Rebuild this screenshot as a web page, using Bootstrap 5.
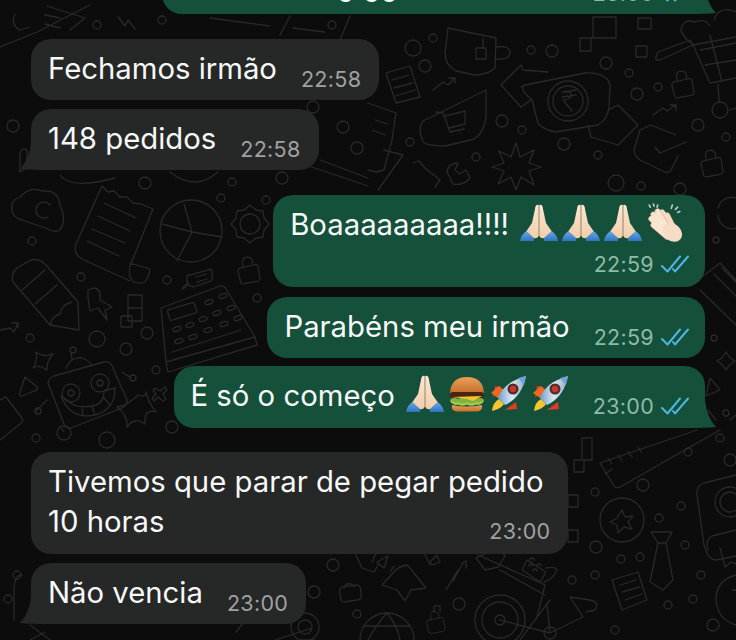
<!DOCTYPE html>
<html lang="pt-BR">
<head>
  <meta charset="UTF-8">
  <title>Conversa</title>
  <meta name="viewport" content="width=device-width, initial-scale=1">
  <link href="https://cdn.jsdelivr.net/npm/bootstrap@5.3.3/dist/css/bootstrap.min.css" rel="stylesheet">
  <style>
    html, body { height: 100%; }
    body { background: #0c0c0c; overflow: hidden; }
    .wa-chat { position: relative; height: 640px; overflow: hidden; padding: 0 31px; font-family: Inter, "Liberation Sans", sans-serif; }
    .wa-doodles { position: absolute; left: 0; top: 0; fill: none; stroke: #292929; stroke-width: 1.3; stroke-linecap: round; stroke-linejoin: round; }
    .wa-list { position: relative; z-index: 1; }
    .wa-bubble { position: relative; border-radius: 20px; color: #f7f8f8; padding: 10px 18px 11px 17px; font-size: 29.3px; line-height: 40px; }
    .wa-in { background: #262727; }
    .wa-out { background: #14503a; padding-right: 16px; }
    .wa-first { height: 62px; margin-top: -48px; width: 543px; }
    .wa-peek { margin-bottom: -9px; margin-right: 195px; }
    .wa-time { font-size: 21.5px; line-height: 24px; color: #a0a1a1; letter-spacing: .3px; white-space: nowrap; }
    .wa-out .wa-time { color: #8fbaa8; }
    .wa-meta { margin-bottom: -2px; }
    .wa-meta-row { margin-top: 7px; }
    .wa-text-pad { padding-right: 7px; }
    .wa-gap-lg { margin-top: 25px; }
    .wa-gap-md { margin-top: 10px; }
    .wa-gap-sm { margin-top: 9px; }
    .wa-tall { padding-bottom: 12px; }
    .wa-tick { width: 28px; height: 18px; margin-left: 7px; fill: none; stroke: #4fb6e3; stroke-width: 2; stroke-linecap: round; stroke-linejoin: round; }
    .wa-emoji { width: 40px; height: 40px; flex: none; transform: translateY(-2px); }
    .wa-emoji-sm { width: 36px; height: 36px; flex: none; transform: translateY(-2px); }
    .wa-pitch { margin-right: 2px; }
    .wa-e-first { margin-left: 10px; }
    .wa-e-next { margin-left: 6px; }
    .wa-tail-out::after, .wa-tail-in::after { content: ""; position: absolute; z-index: -1; bottom: 0; width: 31px; height: 28px; background: inherit; }
    .wa-tail-out::after { right: -11px; clip-path: path('M20 0 Q22 18 31 27 Q22 28 0 28 L0 0 Z'); }
    .wa-tail-in::after { left: -11px; clip-path: path('M11 0 Q10 16 0 27 Q12 28 31 28 L31 0 Z'); }
  </style>
</head>
<body>

<svg width="0" height="0" class="position-absolute">
  <defs>
    <linearGradient id="skin" x1="0" y1="0" x2="0" y2="1"><stop offset="0" stop-color="#fce7d3"/><stop offset="1" stop-color="#f2cdab"/></linearGradient>
    <linearGradient id="sleeve" x1="0" y1="0" x2="0" y2="1"><stop offset="0" stop-color="#6fb0e6"/><stop offset="1" stop-color="#2f74c0"/></linearGradient>
    <linearGradient id="bun" x1="0" y1="0" x2="0" y2="1"><stop offset="0" stop-color="#eb9f58"/><stop offset="1" stop-color="#c4702c"/></linearGradient>
    <linearGradient id="hull" x1="0" y1="0" x2="1" y2="0"><stop offset="0" stop-color="#6f9fd0"/><stop offset=".5" stop-color="#dfe8f0"/><stop offset="1" stop-color="#8fa8c4"/></linearGradient>

    <symbol id="e-pray" viewBox="0 0 40 40">
      <path d="M1 38 Q2 31 9 27 L15 33 L15 38 Z M39 38 Q38 31 31 27 L25 33 L25 38 Z" fill="url(#sleeve)"/>
      <path d="M19.7 2 Q16.5 1 16 6 L13 20 L7.5 28 L15 35 Q18 36 19.7 33 Z" fill="url(#skin)"/>
      <path d="M20.3 2 Q23.5 1 24 6 L27 20 L32.5 28 L25 35 Q22 36 20.3 33 Z" fill="url(#skin)"/>
      <path d="M20 3 L20 33" stroke="#d9ae8c" stroke-width=".8"/>
    </symbol>

    <symbol id="e-clap" viewBox="0 0 36 38">
      <g stroke="#b9cbbd" stroke-width="1.6" stroke-linecap="round">
        <path d="M3 2 L4 4 M7 1 L7.5 3 M11 2 L10.5 4 M25 2 L24 5 M30 4 L28 6 M32 8 L30 9"/>
      </g>
      <g fill="none" stroke-linecap="round">
        <g stroke="#d9ae8c" stroke-width="6"><path d="M27 24 L15 9 M27 26 L20 12"/></g>
        <g stroke="#f6dcc4" stroke-width="5"><path d="M27 24 L15 9 M27 26 L20 12"/></g>
        <g stroke="#d9ae8c" stroke-width="5.6"><path d="M23 27 L11 8 M21 28 L7 11 M20 30 L5 15 M20 32 L7 21"/></g>
        <g stroke="#fae5d2" stroke-width="4.6"><path d="M23 27 L11 8 M21 28 L7 11 M20 30 L5 15 M20 32 L7 21"/></g>
      </g>
      <ellipse cx="25" cy="28" rx="10" ry="8" transform="rotate(40 25 28)" fill="#f6dcc4"/>
    </symbol>

    <symbol id="e-burger" viewBox="0 0 36 36">
      <path d="M1 17 Q2 1 18 1 Q34 1 35 17 Z" fill="url(#bun)"/>
      <path d="M1 24 Q4 20 9 23 Q14 20 18 23 Q23 20 27 23 Q32 20 35 24 L34 27 Q18 30 2 27 Z" fill="#7fb33c"/>
      <rect x="1" y="16" width="34" height="6" rx="3" fill="#4b2415"/>
      <path d="M3 21 L33 20 L24 25 L18 23 Z" fill="#f7c531"/>
      <path d="M2 24 Q6 28 9 26 Q14 29 18 26 Q23 29 27 26 Q31 28 34 24 L34 26 Q31 30 27 28.5 Q22 31 18 28.5 Q13 31 9 28.5 Q5 30 2 26 Z" fill="#a8cc52"/>
      <path d="M3 29 Q18 32 33 29 Q34 35 28 35.5 L8 35.5 Q2 35 3 29 Z" fill="url(#bun)"/>
    </symbol>

    <symbol id="e-rocket" viewBox="0 0 36 36">
      <path d="M2 22 L10 11 L4 10 Z M14 34 L25 26 L26 33 Z" fill="#e23a24"/>
      <path d="M0 17 L8 10 L14 15 L7 22 Z" fill="#ee6a22"/>
      <path d="M1 35 Q2 26 8 23 L13 28 Q10 33 1 35 Z" fill="#f7c531"/>
      <path d="M7 22 Q13 6 35 0 Q31 21 14 29 Z" fill="url(#hull)"/>
      <circle cx="22" cy="13" r="5.5" fill="#4b2d2d"/>
      <circle cx="22" cy="13" r="3.2" fill="#c8392a"/>
      <path d="M27 2 L35 0 L33 9 Z" fill="#6da3d8"/>
    </symbol>

    <symbol id="e-tick" viewBox="0 0 28 18">
      <path d="M1 11 L6.5 16.5 L19 1.5 M12 14 L14 16.5 L27 1.5"/>
    </symbol>

    <symbol id="d-lock" viewBox="0 0 26 30" overflow="visible">
      <path d="M4 13 L21 9 Q24 9 24 12 L26 24 Q26 26 24 27 L8 30 Q5 30 5 28 L2 16 Q2 14 4 13 Z"/>
      <path d="M8 12 L7 7 Q7 1 12 1 Q17 1 18 6 L18 10"/>
    </symbol>
  </defs>
</svg>

<div class="wa-chat">
  <!-- fundo -->
  <svg class="wa-doodles" width="736" height="640" viewBox="0 0 736 640">
    <g id="dots">
      <circle cx="97" cy="25" r="4"/><circle cx="162" cy="20" r="4"/><circle cx="332" cy="25" r="4"/><circle cx="13" cy="126" r="6"/><circle cx="343" cy="127" r="6"/><circle cx="357" cy="148" r="6"/><circle cx="145" cy="183" r="6"/><circle cx="232" cy="182" r="4"/><circle cx="282" cy="178" r="6"/><circle cx="313" cy="107" r="6"/>
      <circle cx="413" cy="48" r="8"/><circle cx="433" cy="38" r="4"/><circle cx="425" cy="66" r="6"/><circle cx="531" cy="50" r="4"/><circle cx="552" cy="51" r="6"/><circle cx="606" cy="63" r="6"/><circle cx="629" cy="73" r="4"/><circle cx="637" cy="94" r="6"/><circle cx="658" cy="87" r="4"/><circle cx="502" cy="121" r="6"/><circle cx="522" cy="130" r="4"/><circle cx="410" cy="142" r="4"/><circle cx="476" cy="157" r="4"/><circle cx="564" cy="144" r="6"/><circle cx="598" cy="155" r="4"/><circle cx="616" cy="183" r="8"/><circle cx="641" cy="186" r="4"/><circle cx="680" cy="189" r="6"/><circle cx="698" cy="125" r="6"/><circle cx="726" cy="137" r="4"/><circle cx="720" cy="110" r="8"/>
      <circle cx="221" cy="198" r="4"/><circle cx="266" cy="200" r="4"/><circle cx="32" cy="241" r="4"/><circle cx="81" cy="277" r="4"/><circle cx="167" cy="280" r="4"/><circle cx="257" cy="298" r="4"/><circle cx="30" cy="338" r="4"/><circle cx="97" cy="339" r="8"/><circle cx="147" cy="333" r="6"/><circle cx="126" cy="349" r="6"/>
      <circle cx="156" cy="370" r="4"/><circle cx="172" cy="427" r="6"/><circle cx="36" cy="438" r="4"/><circle cx="107" cy="440" r="8"/>
      <circle cx="595" cy="492" r="4"/><circle cx="643" cy="485" r="6"/><circle cx="688" cy="452" r="4"/><circle cx="720" cy="438" r="4"/><circle cx="730" cy="460" r="6"/><circle cx="681" cy="506" r="4"/><circle cx="659" cy="518" r="4"/><circle cx="685" cy="545" r="4"/><circle cx="596" cy="547" r="6"/><circle cx="621" cy="559" r="4"/><circle cx="640" cy="557" r="4"/><circle cx="595" cy="575" r="4"/><circle cx="572" cy="580" r="4"/><circle cx="701" cy="575" r="4"/><circle cx="693" cy="599" r="4"/><circle cx="668" cy="605" r="4"/><circle cx="713" cy="625" r="6"/><circle cx="615" cy="630" r="4"/>
      <circle cx="333" cy="565" r="6"/><circle cx="314" cy="592" r="6"/><circle cx="357" cy="614" r="4"/><circle cx="459" cy="604" r="6"/><circle cx="17" cy="575" r="4"/><circle cx="8" cy="599" r="4"/>
      <circle cx="716" cy="240" r="3"/><circle cx="714" cy="338" r="3"/><circle cx="726" cy="413" r="3"/>
    </g>

    <!-- nota, nuvem, pizza, engrenagem -->
    <path d="M102 186 L108 192 L114 191 L120 197 L127 197 L133 203 L141 204 L153 209 L130 266 Q127 283 140 283 Q148 284 150 269 L130 263 M130 281 L82 259 Q73 254 76 244 L102 186 M104 203 L136 218 M98 216 L130 231 M92 229 L125 243 M87 241 L119 256"/>
    <path d="M12 210 Q10 200 20 197 Q30 186 42 191 Q58 189 60 205 Q67 220 60 230 Q55 233 48 229 L22 220 Q13 218 12 210 Z M50 205 A8 8 0 1 0 48 217"/>
    <circle cx="191" cy="231" r="31"/><path d="M184 204 L192 232 L222 237 M192 232 L177 261 M192 232 L162 224"/>
    <circle cx="250" cy="224" r="10"/><polygon points="269,224 264,230 263,237 256,238 250,243 244,238 237,237 236,230 231,224 236,218 237,211 244,210 250,205 256,210 263,211 264,218"/>
    <use href="#d-lock" x="236" y="256" width="24" height="28"/>
    <use href="#d-lock" x="670" y="70" width="24" height="28"/>
    <use href="#d-lock" x="699" y="149" width="24" height="28"/>
    <use href="#d-lock" x="425" y="610" width="20" height="24"/>

    <!-- lápis -->
    <path d="M13 282 Q10 274 17 268 L31 260 Q39 258 45 264 L78 302 L79 330 L50 325 Z M22 290 L45 270 M35 304 L57 285 M50 325 Q52 316 60 314 Q62 304 72 302"/>

    <!-- caixa registradora -->
    <path d="M161 308 L220 286 Q224 285 226 289 L255 337 L257 345 L168 372 L166 362 Z M166 362 L255 337 M172 352 L241 330 M187 280 L187 284 Q187 287 182 289 Q187 281 190 286 M190 275 L211 269 Q214 276 211 281 L193 287 Q186 285 187 277 Q187 275 190 275 Z M196 277 L206 274 M197 282 L207 279"/>
    <rect x="168" y="306" width="28" height="11" rx="2" transform="rotate(-17 182 311)"/>
    <g id="keys"><rect x="205" y="300" width="8" height="4" rx="2" transform="rotate(-18 209 302)"/><rect x="219" y="294" width="8" height="4" rx="2" transform="rotate(-18 223 296)"/><rect x="173" y="327" width="8" height="4" rx="2" transform="rotate(-18 177 329)"/><rect x="186" y="323" width="8" height="4" rx="2" transform="rotate(-18 190 325)"/><rect x="199" y="317" width="8" height="4" rx="2" transform="rotate(-18 203 319)"/><rect x="213" y="311" width="8" height="4" rx="2" transform="rotate(-18 217 313)"/><rect x="227" y="306" width="8" height="4" rx="2" transform="rotate(-18 231 308)"/><rect x="175" y="339" width="8" height="4" rx="2" transform="rotate(-18 179 341)"/><rect x="189" y="335" width="8" height="4" rx="2" transform="rotate(-18 193 337)"/><rect x="204" y="328" width="8" height="4" rx="2" transform="rotate(-18 208 330)"/><rect x="220" y="322" width="8" height="4" rx="2" transform="rotate(-18 224 324)"/><rect x="234" y="316" width="8" height="4" rx="2" transform="rotate(-18 238 318)"/></g>

    <!-- peças pequenas -->
    <path d="M88 298 L88 290 Q97 285 100 293 L100 300 L112 307 L105 310 L107 320 L98 308 L90 311 Z M128 295 L142 295 L142 308 L128 308 Z M128 308 L142 308 L142 321 L128 321 Z M121 316 L132 316 L132 327 L121 327 Z"/>
    <path d="M0 330 L10 328 L14 332 L18 323 M12 323 L18 323 L18 328"/>

    <!-- robô, estrelas -->
    <path d="M48 383 Q49 378 54 376 L104 362 Q110 361 112 366 L127 400 Q128 405 122 408 L71 428 Q66 429 64 424 Z M66 368 Q72 356 82 358 Q90 361 92 366 M71 352 L72 360 M122 372 L131 378 M47 400 L36 411 M60 426 L64 432"/>
    <circle cx="71" cy="393" r="9"/><circle cx="71" cy="393" r="3"/><circle cx="100" cy="383" r="9"/><circle cx="100" cy="383" r="3"/><circle cx="73" cy="350" r="3"/><circle cx="133" cy="378" r="3"/><circle cx="38" cy="411" r="3"/><circle cx="64" cy="433" r="7"/>
    <path d="M61 396 Q70 420 95 415 Q115 410 115 388 L104 391 Q104 404 92 406 Q78 408 72 404 Z M82 407 L83 416 M92 406 L95 415 M104 398 L110 405"/>
    <path d="M36 352 Q44 358 51 354 L53 354 Q46 362 47 370 Q38 364 33 368 Q38 360 36 352 Z"/>
    <path d="M25 377 L37 387 Q39 390 34 391 L22 396 Q19 397 20 392 Z"/>
    <path d="M138 395 Q146 398 146 392 Q148 402 156 412 Q144 408 145 424 Q135 416 127 427 Q128 415 117 407 Q127 406 138 395 Z"/>
    <path d="M155 388 L160 391 L165 387 L167 390 L163 394 L166 399 L163 401 L158 397 L154 401 L152 398 L156 394 L153 390 Z"/>
    <path d="M0 400 L6 397 L22 418 Q24 422 20 424 L0 440"/>

    <!-- canto superior -->
    <path d="M0 47 L37 32 L90 5 M15 14 Q10 25 20 30 L30 27 M45 15 L60 18 M45 24 L60 28 M47 6 L85 18 L70 30 M118 17 L125 26 L128 20 L135 29 M210 18 L270 26 M290 16 L280 35 M293 28 L325 32 M350 16 L340 40 M300 163 L368 186 M320 160 L368 178"/>
    <path d="M20 172 L27 168 L27 150 Q22 147 20 153 Z M60 175 Q70 190 115 178 M170 172 Q195 192 218 172"/>

    <!-- direita de cima -->
    <path d="M448 28 L496 38 L495 68 Q490 74 475 75 L456 71 Q445 65 445 53 Z M496 47 Q510 45 510 53 Q510 60 495 59 M483 38 L483 48"/>
    <rect x="476" y="48" width="10" height="11"/>
    <path d="M580 38 L591 38 L591 51 L580 51 Z M593 17 L616 17 L616 38 L593 38 Z M580 38 L593 38 M636 46 L647 46 L647 57 L636 57 Z M638 18 L651 18 L651 29 L638 29 Z"/>
    <path d="M433 90 L443 82 L448 85 L455 78 M449 78 L455 78 L455 83 M653 115 L663 108 L667 111 L676 105 M670 105 L676 105 L676 111"/>
    <path d="M423 123 L486 92 L486 120 Q482 140 470 142 L445 148 Q425 148 423 143 Q417 132 423 123 Z" transform="translate(0 -2)"/>
    <path d="M436 112 L443 113 L450 132 L464 129 M445 116 L465 111 L465 124 L449 128 M452 135 L452 135 M461 133 L461 133"/>
    <path d="M525 85 L585 73 Q607 72 610 85 L609 108 Q607 120 598 125 L555 132 Q540 128 538 123 L532 100 Q518 88 525 85 Z"/>
    <circle cx="568" cy="101" r="20"/><circle cx="568" cy="101" r="15"/>
    <path d="M562 92 L576 90 M562 97 L576 95 M565 92 Q572 91 571 96 Q569 100 563 100 L572 111"/>
    <path d="M525 85 L521 87 M548 72 L523 70 L521 65 L501 85 L521 107 L531 100 M608 110 L618 105 L638 125 L618 145 L591 137 L588 125"/>
    <polygon points="516,143 520,157 534,150 529,163 541,167 529,171 534,185 521,177 516,190 511,177 498,184 504,171 492,167 504,163 499,151 511,157"/>
    <path d="M413 163 L419 161 L425 168 L440 180 L435 187 M458 163 Q448 163 447 172 L453 184 Q464 186 470 178 L466 170 L460 174 L455 170 Z"/>
    <path d="M386 73 L410 66 L420 97 L396 103 Z M392 80 L409 75 M394 88 L412 83 M396 96 L415 90"/>
    <path d="M368 103 L396 113 L392 140 L384 170 L376 172 L368 170 M384 150 L403 155 L378 190 M375 120 L388 124 M372 130 L385 135"/>
    <path d="M651 125 L676 135 M686 142 L660 153 L655 147 M651 125 L640 130 L634 150 Q634 155 640 160 L665 172 Q670 174 672 168 L678 156"/>
    <path d="M656 57 Q655 61 660 60 L693 45 L690 40 L658 52 Z M693 45 L736 37 M693 45 L710 83 L736 78 M700 50 L736 43 M705 65 L736 60 M710 35 L722 82 M718 84 L719 102 M730 110 L736 108"/>
    <path d="M681 30 Q683 18 695 22 Q705 18 710 26 M681 30 Q684 40 695 45 M714 20 Q718 8 730 10 L736 12"/>

    <!-- direita do meio -->
    <path d="M718 208 A14 14 0 0 1 736 198 M718 215 A14 14 0 0 0 736 228 M698 280 L720 263 L736 280 M700 290 L736 325 M714 274 L736 296 M722 268 L736 282"/>
    <path d="M726 352 Q729 358 735 361 Q729 364 726 370 Q723 364 717 361 Q723 358 726 352 Z M710 378 L720 390 L706 396 Z M708 410 L716 420 M736 415 L730 420"/>

    <!-- embaixo, direita -->
    <path d="M600 463 L697 430 M605 474 L612 469 M600 463 L614 486 Q616 489 620 487 L720 430 M608 458 L612 464 M618 455 L622 461 M628 451 L632 457 M638 447 L642 453"/>
    <path d="M582 438 L592 438 L592 460 L582 460 Z M574 460 L584 460 L584 472 L574 472 Z M584 460 L592 460 M568 495 L578 495 L578 507 L568 507 Z M568 530 L578 530 L578 542 L568 542 Z"/>
    <circle cx="622" cy="520" r="22"/>
    <path d="M622 510 L625 517 L633 516 L628 522 L632 529 L624 527 L618 533 L617 525 L610 522 L617 518 Z"/>
    <path d="M651 532 L672 532 L666 543 L673 580 L663 590 L650 582 L658 543 Z M658 543 L666 543"/>
    <path d="M612 580 L638 572 L647 600 L622 610 Z M620 585 L636 580 M622 592 L640 587 M625 600 L642 594"/>
    <path d="M736 475 L704 483 Q696 486 697 495 L704 545 Q708 560 716 560 L736 556 M736 530 L712 536 Q705 540 708 550 M720 548 L725 567 L731 562 L736 564"/>
    <circle cx="730" cy="502" r="15"/><circle cx="730" cy="502" r="10"/>
    <path d="M736 575 Q716 580 716 600 Q718 620 736 625 M732 590 L736 590"/>
    <!-- bicicleta -->
    <circle cx="500" cy="620" r="25"/><circle cx="500" cy="620" r="18"/><circle cx="500" cy="620" r="5"/><circle cx="550" cy="633" r="6"/>
    <path d="M478 555 L545 585 M500 570 L545 595 M545 585 L537 617 M547 603 L550 633 M550 633 L583 617 L570 597 M570 597 L590 600 Q600 602 595 610 L586 612 M500 620 L550 633 M520 640 L550 600"/>
    <path d="M527 560 L546 572 L540 582 L522 570 Z M546 568 Q555 566 557 570 Q552 580 544 582"/>
    <path d="M530 560 A2 2 0 0 1 534 560 M537 566 A2 2 0 0 1 541 566 M533 571 A2 2 0 0 1 537 571 M529 566 A2 2 0 0 1 533 566"/>
    <path d="M476 558 L498 548 L505 556 L498 567 L485 570 Z M446 590 L458 570 L453 581 L463 563 M462 563 L466 561 L466 568"/>

    <!-- embaixo, meio -->
    <rect x="340" y="586" width="21" height="15" rx="4" transform="rotate(-8 350 593)"/>
    <path d="M344 588 L346 584 L352 584 L354 587"/>
    <path d="M407 565 Q412 570 414 573 L426 588 L411 590 L405 601 L397 590 L382 585 L392 574 Q398 566 407 565 Z M394 566 L390 572 M356 555 L362 568 L374 572 L378 565 M376 553 L372 562 M424 553 L430 565"/>
    <path d="M377 562 L388 556 L384 568 Z M430 562 L437 555 L440 562 L432 565 Z"/>
    <path d="M360 640 A27 27 0 0 1 414 640 M387 613 Q376 625 368 640 M387 613 Q397 625 400 640 M364 626 Q385 626 410 626"/>
    <path d="M434 612 L434 606 L440 606 L440 612"/>
    <circle cx="305" cy="627" r="14"/><circle cx="305" cy="627" r="7"/>
    <path d="M275 640 L312 628 M250 575 L250 600 M280 600 Q260 590 252 612 L236 632"/>
    <path d="M14 620 L14 590 Q14 575 22 575 M30 625 L50 640 M30 640 L45 632 M300 640 L315 640"/>
  </svg>

  <div class="wa-list d-flex flex-column">
    <div class="d-flex justify-content-end">
      <div class="wa-bubble wa-out wa-first wa-tail-out d-flex justify-content-end align-items-end">
        <span class="wa-peek">o oo</span>
        <span class="wa-meta d-flex align-items-center"><span class="wa-time">23:00</span><svg class="wa-tick"><use href="#e-tick"/></svg></span>
      </div>
    </div>

    <div class="d-flex justify-content-start wa-gap-lg">
      <div class="wa-bubble wa-in d-flex align-items-end">
        <span>Fechamos irmão</span>
        <span class="wa-time wa-meta ms-4">22:58</span>
      </div>
    </div>
    <div class="d-flex justify-content-start wa-gap-sm">
      <div class="wa-bubble wa-in wa-tail-in d-flex align-items-end">
        <span>148 pedidos</span>
        <span class="wa-time wa-meta ms-4">22:58</span>
      </div>
    </div>

    <div class="d-flex justify-content-end wa-gap-lg">
      <div class="wa-bubble wa-out d-flex flex-column">
        <span class="d-flex align-items-center">Boaaaaaaaaa!!!!
          <svg class="wa-emoji wa-e-first wa-pitch"><use href="#e-pray"/></svg>
          <svg class="wa-emoji wa-pitch"><use href="#e-pray"/></svg>
          <svg class="wa-emoji wa-pitch"><use href="#e-pray"/></svg>
          <svg class="wa-emoji me-1"><use href="#e-clap"/></svg>
        </span>
        <span class="wa-meta-row d-flex align-items-center justify-content-end"><span class="wa-time">22:59</span><svg class="wa-tick"><use href="#e-tick"/></svg></span>
      </div>
    </div>
    <div class="d-flex justify-content-end wa-gap-md">
      <div class="wa-bubble wa-out d-flex align-items-end">
        <span>Parabéns meu irmão</span>
        <span class="wa-meta d-flex align-items-center ms-4"><span class="wa-time">22:59</span><svg class="wa-tick"><use href="#e-tick"/></svg></span>
      </div>
    </div>
    <div class="d-flex justify-content-end mt-2">
      <div class="wa-bubble wa-out wa-tall wa-tail-out d-flex align-items-end">
        <span class="d-flex align-items-center">É só o começo
          <svg class="wa-emoji wa-e-first"><use href="#e-pray"/></svg>
          <svg class="wa-emoji-sm ms-1"><use href="#e-burger"/></svg>
          <svg class="wa-emoji-sm wa-e-next"><use href="#e-rocket"/></svg>
          <svg class="wa-emoji-sm wa-e-next"><use href="#e-rocket"/></svg>
        </span>
        <span class="wa-meta ms-4 d-flex align-items-center"><span class="wa-time">23:00</span><svg class="wa-tick"><use href="#e-tick"/></svg></span>
      </div>
    </div>

    <div class="d-flex justify-content-start mt-4">
      <div class="wa-bubble wa-in d-flex flex-column">
        <span class="wa-text-pad">Tivemos que parar de pegar pedido<br>10 horas</span>
        <span class="wa-time align-self-end" style="margin-top:-23px">23:00</span>
      </div>
    </div>
    <div class="d-flex justify-content-start wa-gap-sm">
      <div class="wa-bubble wa-in wa-tail-in d-flex align-items-end">
        <span>Não vencia</span>
        <span class="wa-time wa-meta ms-4">23:00</span>
      </div>
    </div>
  </div>
</div>

<script src="https://cdn.jsdelivr.net/npm/bootstrap@5.3.3/dist/js/bootstrap.bundle.min.js"></script>
</body>
</html>
